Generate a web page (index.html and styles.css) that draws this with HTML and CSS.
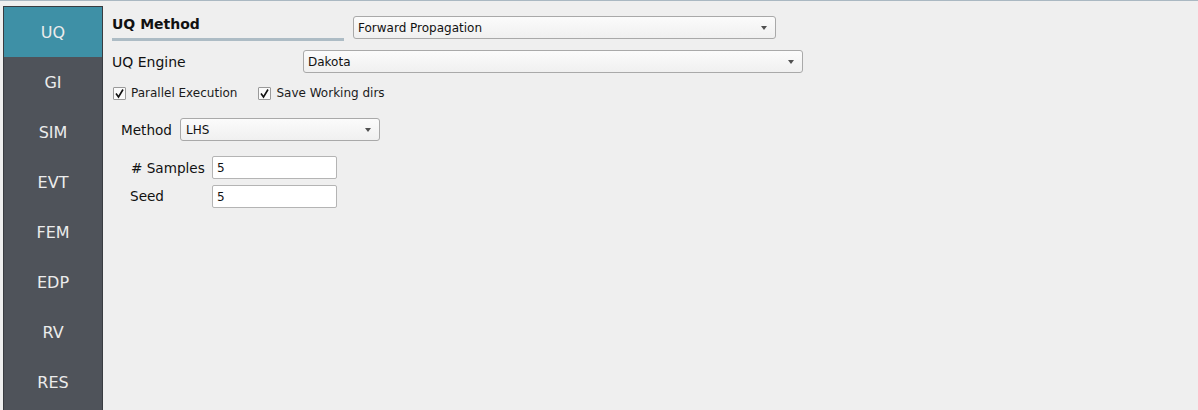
FILE: index.html
```html
<!DOCTYPE html>
<html>
<head>
<meta charset="utf-8">
<link rel="stylesheet" href="styles.css">
</head>
<body>
<div class="app">
  <nav class="sidebar">
    <div class="nav-item active">UQ</div>
    <div class="nav-item">GI</div>
    <div class="nav-item">SIM</div>
    <div class="nav-item">EVT</div>
    <div class="nav-item">FEM</div>
    <div class="nav-item">EDP</div>
    <div class="nav-item">RV</div>
    <div class="nav-item">RES</div>
  </nav>
  <main class="content">
    <div class="row row-method">
      <div class="section-title">
        <div class="title-text">UQ Method</div>
        <div class="title-rule"></div>
      </div>
      <div class="combo combo-method">Forward Propagation<span class="arrow"></span></div>
    </div>
    <div class="row row-engine">
      <div class="label label-engine">UQ Engine</div>
      <div class="combo combo-engine">Dakota<span class="arrow"></span></div>
    </div>
    <div class="row row-checks">
      <div class="check">
        <span class="box"><svg width="11" height="11" viewBox="0 0 11 11"><polyline points="2,5.5 4.5,9 9,1.5" fill="none" stroke="#111" stroke-width="1.6"/></svg></span>
        <span class="check-label">Parallel Execution</span>
      </div>
      <div class="check">
        <span class="box"><svg width="11" height="11" viewBox="0 0 11 11"><polyline points="2,5.5 4.5,9 9,1.5" fill="none" stroke="#111" stroke-width="1.6"/></svg></span>
        <span class="check-label">Save Working dirs</span>
      </div>
    </div>
    <div class="sampling">
      <div class="row row-sampling-method">
        <div class="label label-method">Method</div>
        <div class="combo combo-lhs">LHS<span class="arrow"></span></div>
      </div>
      <div class="params">
        <div class="label param-label">#&nbsp;Samples</div>
        <div class="input">5</div>
        <div class="label param-label seed">Seed</div>
        <div class="input">5</div>
      </div>
    </div>
  </main>
</div>
</body>
</html>
```

FILE: styles.css
```css
html, body {
  margin: 0;
  padding: 0;
  height: 100%;
  overflow: hidden;
}
body {
  background: #efefef;
  font-family: "DejaVu Sans", sans-serif;
  color: #1b1b1b;
  border-top: 1px solid #aab8c2;
  box-sizing: border-box;
}
.app {
  display: flex;
  align-items: flex-start;
  padding-left: 3px;
  height: 409px;
}
.sidebar {
  margin-top: 5px;
  width: 98px;
  height: 420px;
  background: #4f535a;
  border: 1px solid #393c41;
  display: flex;
  flex-direction: column;
  flex-shrink: 0;
}
.nav-item {
  height: 50px;
  display: flex;
  align-items: center;
  justify-content: center;
  font-size: 16px;
  color: #ececec;
}
.nav-item.active {
  background: #3e90a6;
}
.content {
  padding-left: 9px;
  padding-top: 13px;
  display: flex;
  flex-direction: column;
}
.row {
  display: flex;
  align-items: center;
}
.row-method {
  align-items: flex-start;
  height: 27px;
}
.section-title {
  width: 232px;
  margin-right: 9px;
}
.title-text {
  font-weight: bold;
  font-size: 14px;
  line-height: 19px;
  padding-top: 1px;
  height: 19px;
  color: #111;
}
.title-rule {
  margin-top: 4px;
  height: 3px;
  background: #adbcc5;
}
.combo {
  position: relative;
  box-sizing: border-box;
  height: 23px;
  border: 1px solid #a9a9a9;
  border-radius: 3px;
  background: linear-gradient(#fbfbfb, #f0f0f0);
  font-size: 12px;
  line-height: 20px;
  padding-top: 1px;
  padding-left: 4px;
  color: #111;
}
.arrow {
  position: absolute;
  right: 8px;
  top: 9px;
  width: 0;
  height: 0;
  border-left: 3.5px solid transparent;
  border-right: 3.5px solid transparent;
  border-top: 4px solid #505050;
}
.combo-method {
  margin-top: 2px;
  width: 423px;
}
.row-engine {
  margin-top: 9px;
  height: 23px;
}
.label {
  font-size: 14px;
  color: #111;
}
.label-engine {
  width: 191px;
}
.combo-engine {
  width: 500px;
}
.row-checks {
  margin-top: 11px;
  height: 18px;
  gap: 20px;
}
.check {
  display: flex;
  align-items: center;
  font-size: 12px;
}
.box {
  box-sizing: border-box;
  width: 13px;
  height: 13px;
  margin-left: 1px;
  margin-right: 5px;
  border: 1px solid #9a9a9a;
  border-radius: 1px;
  background: #fafafa;
  display: flex;
  align-items: center;
  justify-content: center;
}
.box svg {
  display: block;
}
.sampling {
  margin-top: 16px;
  padding-left: 9px;
  display: flex;
  flex-direction: column;
}
.row-sampling-method {
  height: 23px;
}
.label-method {
  font-size: 13.6px;
  width: 59px;
}
.combo-lhs {
  width: 200px;
  padding-left: 5px;
}
.params {
  margin-top: 15px;
  padding-left: 10px;
  display: grid;
  grid-template-columns: 81px 125px;
  grid-auto-rows: 23px;
  row-gap: 6px;
  align-items: center;
}
.param-label {
  font-size: 13.6px;
}
.param-label.seed {
  margin-left: -1px;
  margin-top: -1px;
}
.input {
  box-sizing: border-box;
  height: 23px;
  border: 1px solid #b4b4b4;
  border-radius: 2px;
  background: #ffffff;
  font-size: 12px;
  line-height: 20px;
  padding-top: 1px;
  padding-left: 4px;
  color: #111;
}
```
